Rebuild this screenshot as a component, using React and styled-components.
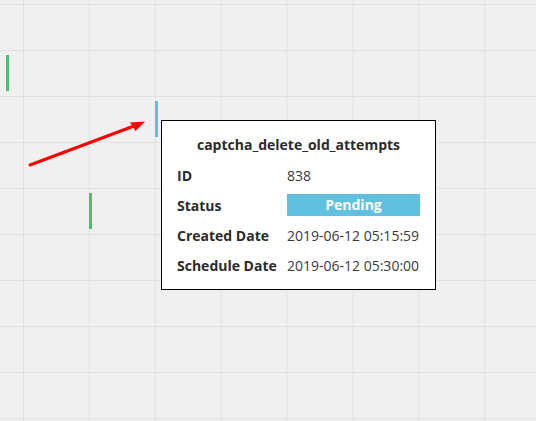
import React from 'react';
import styled, { createGlobalStyle } from 'styled-components';

const GlobalStyle = createGlobalStyle`
  html, body {
    margin: 0;
    padding: 0;
  }
  body {
    font-family: "Open Sans", "Liberation Sans", sans-serif;
    color: #333;
  }
`;

// timeline canvas with the light grid
const Canvas = styled.div`
  position: relative;
  width: 536px;
  height: 421px;
  overflow: hidden;
  background-color: #f0f0f0;
  background-image:
    linear-gradient(to right, #e2e2e2 1px, transparent 1px),
    linear-gradient(to bottom, #e2e2e2 1px, transparent 1px);
  background-size: 65.9px 46px;
  background-position: 23px 4px;
`;

const JobBar = styled.div`
  position: absolute;
  width: 3px;
  height: 36px;
  background: ${(p) => (p.$status === 'pending' ? '#5fc1de' : '#45c26e')};
`;

const Arrow = styled.svg`
  position: absolute;
  left: 0;
  top: 0;
  pointer-events: none;
`;

const Tooltip = styled.div`
  position: absolute;
  left: 161px;
  top: 120px;
  width: 275px;
  box-sizing: border-box;
  background: #fff;
  border: 1px solid #000;
  padding: 12px 15px 9px;
`;

const Title = styled.div`
  font-size: 14px;
  font-weight: 700;
  line-height: 24px;
  text-align: center;
  margin-bottom: 3px;
  color: #2b2b2b;
`;

const Details = styled.div`
  display: grid;
  grid-template-columns: 110px 133px;
  grid-auto-rows: 30px;
  align-items: center;
`;

const Label = styled.div`
  font-size: 14px;
  font-weight: 700;
  color: #2b2b2b;
  white-space: nowrap;
`;

const Value = styled.div`
  font-size: 14px;
  color: #3a3a3a;
  white-space: nowrap;
`;

const Badge = styled.div`
  height: 22px;
  line-height: 22px;
  background: #5fc1de;
  color: #fff;
  font-size: 14px;
  font-weight: 700;
  text-align: center;
`;

const bars = [
  { x: 6, y: 55, status: 'done' },
  { x: 89, y: 193, status: 'done' },
  { x: 155, y: 101, status: 'pending' },
];

const job = {
  name: 'captcha_delete_old_attempts',
  id: 838,
  created: '2019-06-12 05:15:59',
  scheduled: '2019-06-12 05:30:00',
};

const App = () => {
  return (
    <>
      <GlobalStyle />
      <Canvas>
        {bars.map((b, i) => (
          <JobBar key={i} $status={b.status} style={{ left: b.x, top: b.y }} />
        ))}

        {/* Annotation arrow */}
        <Arrow width="536" height="421" viewBox="0 0 536 421">
          <line x1="30" y1="165" x2="134" y2="126" stroke="#ff0000" strokeWidth="3" strokeLinecap="round" />
          <polygon points="145,121.5 130,122.5 135.5,131" fill="#ff0000" />
        </Arrow>

        <Tooltip>
          <Title>{job.name}</Title>
          <Details>
            <Label>ID</Label>
            <Value>{job.id}</Value>
            <Label>Status</Label>
            <Badge>Pending</Badge>
            <Label>Created Date</Label>
            <Value>{job.created}</Value>
            <Label>Schedule Date</Label>
            <Value>{job.scheduled}</Value>
          </Details>
        </Tooltip>
      </Canvas>
    </>
  );
};

export default App;
